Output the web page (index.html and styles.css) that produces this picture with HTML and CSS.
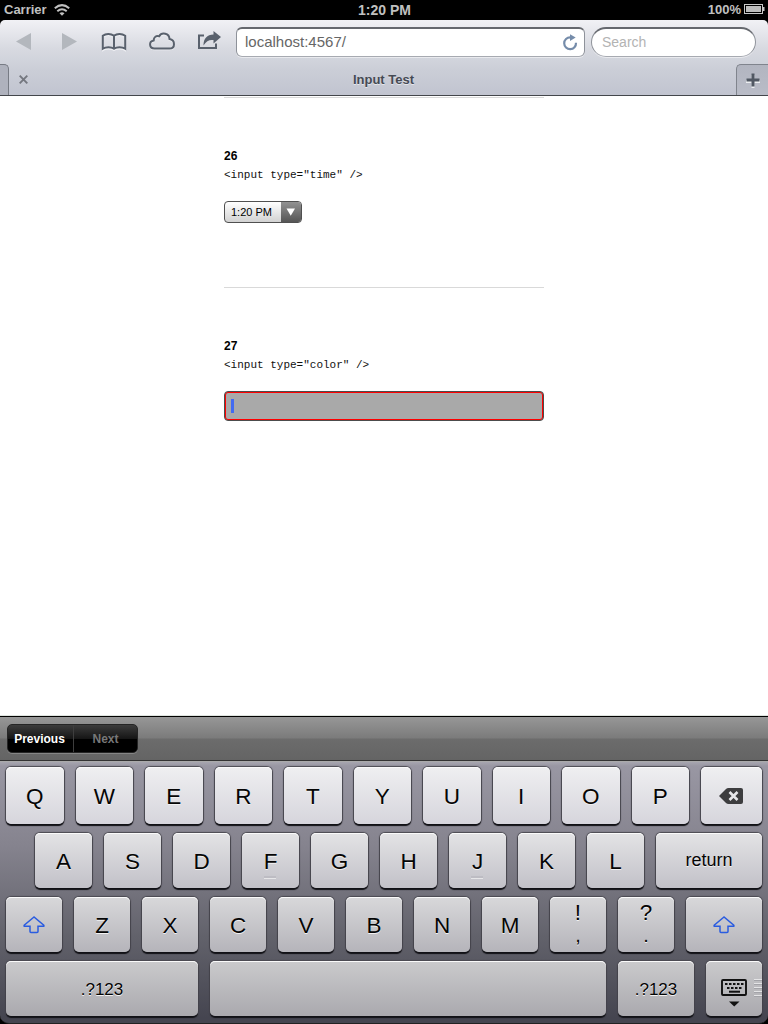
FILE: index.html
```html
<!DOCTYPE html>
<html lang="en">
<head>
<meta charset="utf-8">
<title>Input Test</title>
<link rel="stylesheet" href="styles.css">
</head>
<body>
<div class="status">
  <div class="status-side"><span>Carrier</span>
    <svg class="wifi" width="16" height="12" viewBox="0 0 16 12"><g fill="none" stroke="#c0c0c0" stroke-width="2"><path d="M.8 4.200Q8-1.900 15.200 4.200"/><path d="M3.300 7.300Q8 3.300 12.700 7.300"/></g><path d="M5.500 9.200Q8 7.300 10.500 9.200L8 11.800z" fill="#c0c0c0"/></svg>
  </div>
  <div class="clock">1:20 PM</div>
  <div class="status-side right"><span>100%</span>
    <svg class="battery" width="21" height="10" viewBox="0 0 21 10"><rect x=".5" y=".5" width="18" height="9" fill="none" stroke="#c8c8c8"/><rect x="2" y="2" width="15" height="6" fill="#bdbdbd"/><path d="M19 3h1.500v4H19z" fill="#c8c8c8"/></svg>
  </div>
</div>
<div class="chrome-wrap">
<header class="chrome">
  <div class="toolbar">
    <svg class="tools" width="236" height="44" viewBox="0 0 236 44">
      <path d="M16 21.500L31 13v17zM77 21.500L62 13v17z" fill="#b3b7bd"/>
      <g fill="none" stroke="#f2f3f6" stroke-width="1.600" transform="translate(0 1)"><path d="M114 29.200c-3-2-8-2-11.200 0V16c3-2.500 8-2.500 11.200 0 3-2.500 8-2.500 11.200 0v13.200c-3.200-2-8.200-2-11.200 0z"/><path d="M154.500 28.500c-5.500 0-6-7-.8-8-.1-3.600 2.700-5 5.400-4.100 2.700-4.700 10.200-3.100 10.400 2.600 6 1 6 9.500 0 9.500z"/></g>
      <g fill="none" stroke="#59616d" stroke-width="2"><path d="M114 28.700c-3-2-8-2-11.200 0V15.800c3-2.500 8-2.500 11.200 0 3-2.500 8-2.500 11.200 0v12.900c-3.200-2-8.200-2-11.200 0zM114 15.800v13"/><path d="M154.500 28.500c-5.500 0-6-7-.8-8-.1-3.600 2.700-5 5.400-4.100 2.700-4.700 10.200-3.100 10.400 2.600 6 1 6 9.500 0 9.500z"/><path d="M204 15.500h-5V28h17v-4.500"/></g>
      <path d="M203.500 25.500c0-7 3.500-11 10-11V11l7.500 6-7.500 6.500V20c-4.500-.5-7 1-10 5.500z" fill="#59616d"/>
    </svg>
    <div class="address"><span>localhost:4567/</span>
      <svg width="16" height="17" viewBox="0 0 16 17"><path d="M14 8.800a5.900 5.900 0 1 1-5.700-5.500h1" fill="none" stroke="#758caa" stroke-width="2.200"/><path d="M8 .3l5.700 3.300L8 7z" fill="#758caa"/></svg>
    </div>
    <div class="search"><span>Search</span></div>
  </div>
  <div class="tabs">
    <div class="tab-edge"></div>
    <div class="tab"><svg class="close" width="9" height="9" viewBox="0 0 9 9"><path d="M.7.7l7.600 7.600M8.300.7L.7 8.300" stroke="#74777f" stroke-width="1.900"/></svg><span>Input Test</span></div>
    <div class="tab-add"><svg width="14" height="15" viewBox="0 0 14 15"><path d="M7 2v13M0 8.500h14" stroke="#eceef1" stroke-width="3"/><path d="M7 .5v13M.5 7h13" stroke="#515863" stroke-width="3"/></svg></div>
  </div>
</header>
</div>
<main class="page">
  <section class="item">
    <h2>26</h2>
    <code>&lt;input type="time" /&gt;</code>
    <div class="time"><span>1:20 PM</span><i><svg width="10" height="8" viewBox="0 0 10 8"><path d="M.5.5h8.500L4.750 7.700z" fill="#fff"/></svg></i></div>
  </section>
  <section class="item">
    <h2>27</h2>
    <code>&lt;input type="color" /&gt;</code>
    <div class="color"><b class="caret"></b></div>
  </section>
</main>
<div class="assist"><div class="segments"><span>Previous</span><span class="off">Next</span></div></div>
<div class="keyboard-bg">
<div class="keyboard">
  <div class="row r1"><div class="key">Q</div><div class="key">W</div><div class="key">E</div><div class="key">R</div><div class="key">T</div><div class="key">Y</div><div class="key">U</div><div class="key">I</div><div class="key">O</div><div class="key">P</div>
    <div class="key last erase"><svg width="24" height="16" viewBox="0 0 24 16"><path d="M0 8L7 1Q8 0 9.500 0H22q2 0 2 2v12q0 2-2 2H9.500Q8 16 7 15z" fill="#3d3d3f"/><path d="M10.500 4l8 8M18.500 4l-8 8" stroke="#e6e6e9" stroke-width="2.600"/></svg></div></div>
  <div class="row r2"><div class="key">A</div><div class="key">S</div><div class="key">D</div><div class="key bump">F</div><div class="key">G</div><div class="key">H</div><div class="key bump">J</div><div class="key">K</div><div class="key">L</div><div class="key last word">return</div></div>
  <div class="row r3">
    <div class="key shift"><svg width="24" height="20" viewBox="0 0 24 20"><path id="sh" d="M12 2L2.200 10.300q-.5 1 .5 1H8v5.200q0 1 1 1h6q1 0 1-1v-5.200h5.300q1 0 .5-1z" fill="none" stroke="#2a5ce0" stroke-width="1.500"/></svg></div>
    <div class="key">Z</div><div class="key">X</div><div class="key">C</div><div class="key">V</div><div class="key">B</div><div class="key">N</div><div class="key">M</div>
    <div class="key dual"><span>!</span><span>,</span></div><div class="key dual"><span>?</span><span>.</span></div>
    <div class="key last shift"><svg width="24" height="20" viewBox="0 0 24 20"><use href="#sh"/></svg></div></div>
  <div class="row r4"><div class="key alt">.?123</div><div class="key space"></div><div class="key alt num">.?123</div>
    <div class="key hide"><svg width="26" height="28" viewBox="0 0 26 28"><rect x="1" y="1" width="24" height="15" rx="1" fill="none" stroke="#111" stroke-width="1.900"/><g stroke="#111" stroke-width="2"><path d="M4 5h18.500" stroke-dasharray="2.500 1.500"/><path d="M6 9h15" stroke-dasharray="2.500 1.500"/><path d="M8 12.700h11"/></g><path d="M8 22.500h10.500L13.200 27.500z" fill="#111"/></svg><b class="grip"></b></div></div>
</div>
</div>
</body>
</html>
```
FILE: styles.css
```css
* { box-sizing: border-box; }
body { margin: 0; width: 768px; height: 1024px; overflow: hidden; display: flex; flex-direction: column; background: #fff; font-family: "Liberation Sans", Arial, sans-serif; }
svg { display: block; flex: none; }
.status { height: 20px; background: #000; color: #c0c0c0; display: flex; align-items: center; font-weight: bold; font-size: 13px; line-height: 20px; }
.status-side { flex: 1; display: flex; align-items: center; padding-left: 4px; }
.wifi { margin-left: 7px; }
.status-side.right { justify-content: flex-end; padding: 0 3px 0 0; }
.battery { margin-left: 3px; margin-top: -2px; }
.clock { font-size: 14px; }
.chrome-wrap { background: #000; }
.chrome { height: 76px; background: linear-gradient(#f1f1f5, #d8dae1 28px, #cbced7 50px, #c1c4d0 75px); border-bottom: 1px solid #43464b; border-radius: 5px 5px 0 0; }
.toolbar { height: 44px; display: flex; align-items: center; }
.address, .search { height: 30px; border: 1px solid #8e929a; border-top: 2px solid #65686e; border-bottom-color: #a7aab1; background: #fff; color: #666; font-size: 15px; display: flex; align-items: center; box-shadow: 0 1px #e9eaee; }
.address { width: 349px; border-radius: 6px; padding: 0 6px 0 8px; justify-content: space-between; }
.address span, .search span { padding-bottom: 2px; }
.search { width: 165px; margin-left: 6px; border-radius: 15px; color: #b3b3b3; padding-left: 10px; font-size: 14px; }
.tabs { height: 31px; display: flex; }
.tab-edge { width: 9px; background: #afb2bd; border: solid #777b84; border-width: 1px 1px 0 0; border-radius: 0 5px 0 0; }
.tab { flex: 1; position: relative; display: flex; align-items: center; justify-content: center; font-size: 13px; font-weight: bold; color: #454a54; text-shadow: 0 1px #e5e7ec; padding-left: 22px; padding-bottom: 1px; }
.close { position: absolute; left: 10px; top: 11px; }
.tab-add { width: 32px; background: linear-gradient(#b2b5c0, #b9bcc7); border: solid #80848d; border-width: 1px 0 0 1px; border-radius: 5px 0 0 0; display: flex; align-items: center; justify-content: center; }
.page { flex: 1; width: 320px; margin: 0 auto; padding-top: 1px; overflow: hidden; }
.item { height: 190px; border-top: 1px solid #d9d9d9; padding-top: 49px; }
h2 { margin: 0; font-size: 12px; line-height: 18px; color: #000; }
code { display: block; font: 11px/18px "Liberation Mono", monospace; color: #111; margin-top: 1px; }
.time { width: 78px; height: 22px; margin-top: 17px; border: 1px solid #505050; border-radius: 4px; display: flex; overflow: hidden; font-size: 11px; line-height: 20px; background: linear-gradient(#fff, #d2d2d2); }
.time span { flex: 1; padding-left: 6px; }
.time i { width: 20px; background: linear-gradient(#929292, #555); display: flex; align-items: center; justify-content: center; }
.color { height: 30px; margin-top: 17px; border: 1px solid #4c4c4c; border-radius: 4px; background: #a9a9a9; box-shadow: inset 0 0 0 1px #f00; padding: 7px 6px; }
.caret { display: block; width: 3px; height: 14px; background: #426bf2; }
.assist { height: 44px; border-top: 1px solid #000; background: linear-gradient(#979797, #7b7b7b 21px, #6c6c6c 22px, #646464); padding: 7px; box-shadow: 0 -1px #dfe5e0; }
.segments { width: 131px; height: 29px; display: flex; border: 1px solid #252525; border-radius: 5px; background: linear-gradient(#3c3c3c, #161616 50%, #000 51%); box-shadow: 0 1px #858585; overflow: hidden; font-size: 12px; font-weight: bold; color: #fff; line-height: 28px; text-align: center; }
.segments span { flex: 1; }
.segments span:first-child { padding-right: 2px; }
.segments .off { color: #777; border-left: 1px solid #3e3e3e; }
.keyboard-bg { height: 264px; background: #000; }
.keyboard { height: 264px; border-top: 1px solid #333; border-bottom: 1px solid #222; border-radius: 0 0 9px 9px; padding: 6px 6px 7px; background: linear-gradient(#aaa9b2, #9997a3 5px, #85838e 85px, #62626b 175px, #454550 257px); display: flex; flex-direction: column; gap: 9px; box-shadow: inset 0 1px #aaa; }
.row { display: flex; gap: 12px; height: 55px; }
.r1 { height: 57px; }
.r2 { padding-left: 29px; }
.key { flex: none; border-radius: 5px; display: flex; align-items: center; justify-content: center; color: #050505; font-size: 22.5px; text-shadow: 0 1px #f2f2f2; position: relative; padding-top: 2px; box-shadow: 0 2px 1px #111116, 0 0 1px 1px #4b4a52, inset 0 1px #fafafa; }
.r1 .key { width: 57.5px; background: linear-gradient(#efeff1, #d6d5dc); }
.r2 .key { width: 57px; background: linear-gradient(#e3e3e5, #c2c1c8); }
.r3 .key { width: 56px; background: linear-gradient(#d8d8da, #b5b4ba); }
.r4 .key { width: 56px; background: linear-gradient(#cacacc, #aaa9ae); font-size: 17px; }
.row .key.last { flex: 1; }
.r1 .key.erase { padding: 0 1px 0 0; }
.r3 .key.shift { padding-top: 0; }
.r4 .alt { width: 192px; }
.r4 .num { width: 76px; }
.r4 .space { width: 396px; }
.key.word { font-size: 18px; padding: 0; }
.key.bump::after { content: ""; position: absolute; left: 22px; bottom: 9px; width: 12px; height: 2px; background: #bdbcc3; border-bottom: 1px solid #e6e6e8; }
.key.dual { flex-direction: column; padding: 5px 0 6px; justify-content: space-between; line-height: 22px; }
.key.dual span { height: 22px; line-height: 22px; }
.key.dual span:last-child { font-size: 20px; }
.key.hide svg { margin-top: 7px; }
.grip { position: absolute; right: 0; top: 18px; width: 8px; height: 18px; background: repeating-linear-gradient(#e4e4e6 0 1px, #a3a3a8 1px 2px, transparent 2px 4px); }
```
